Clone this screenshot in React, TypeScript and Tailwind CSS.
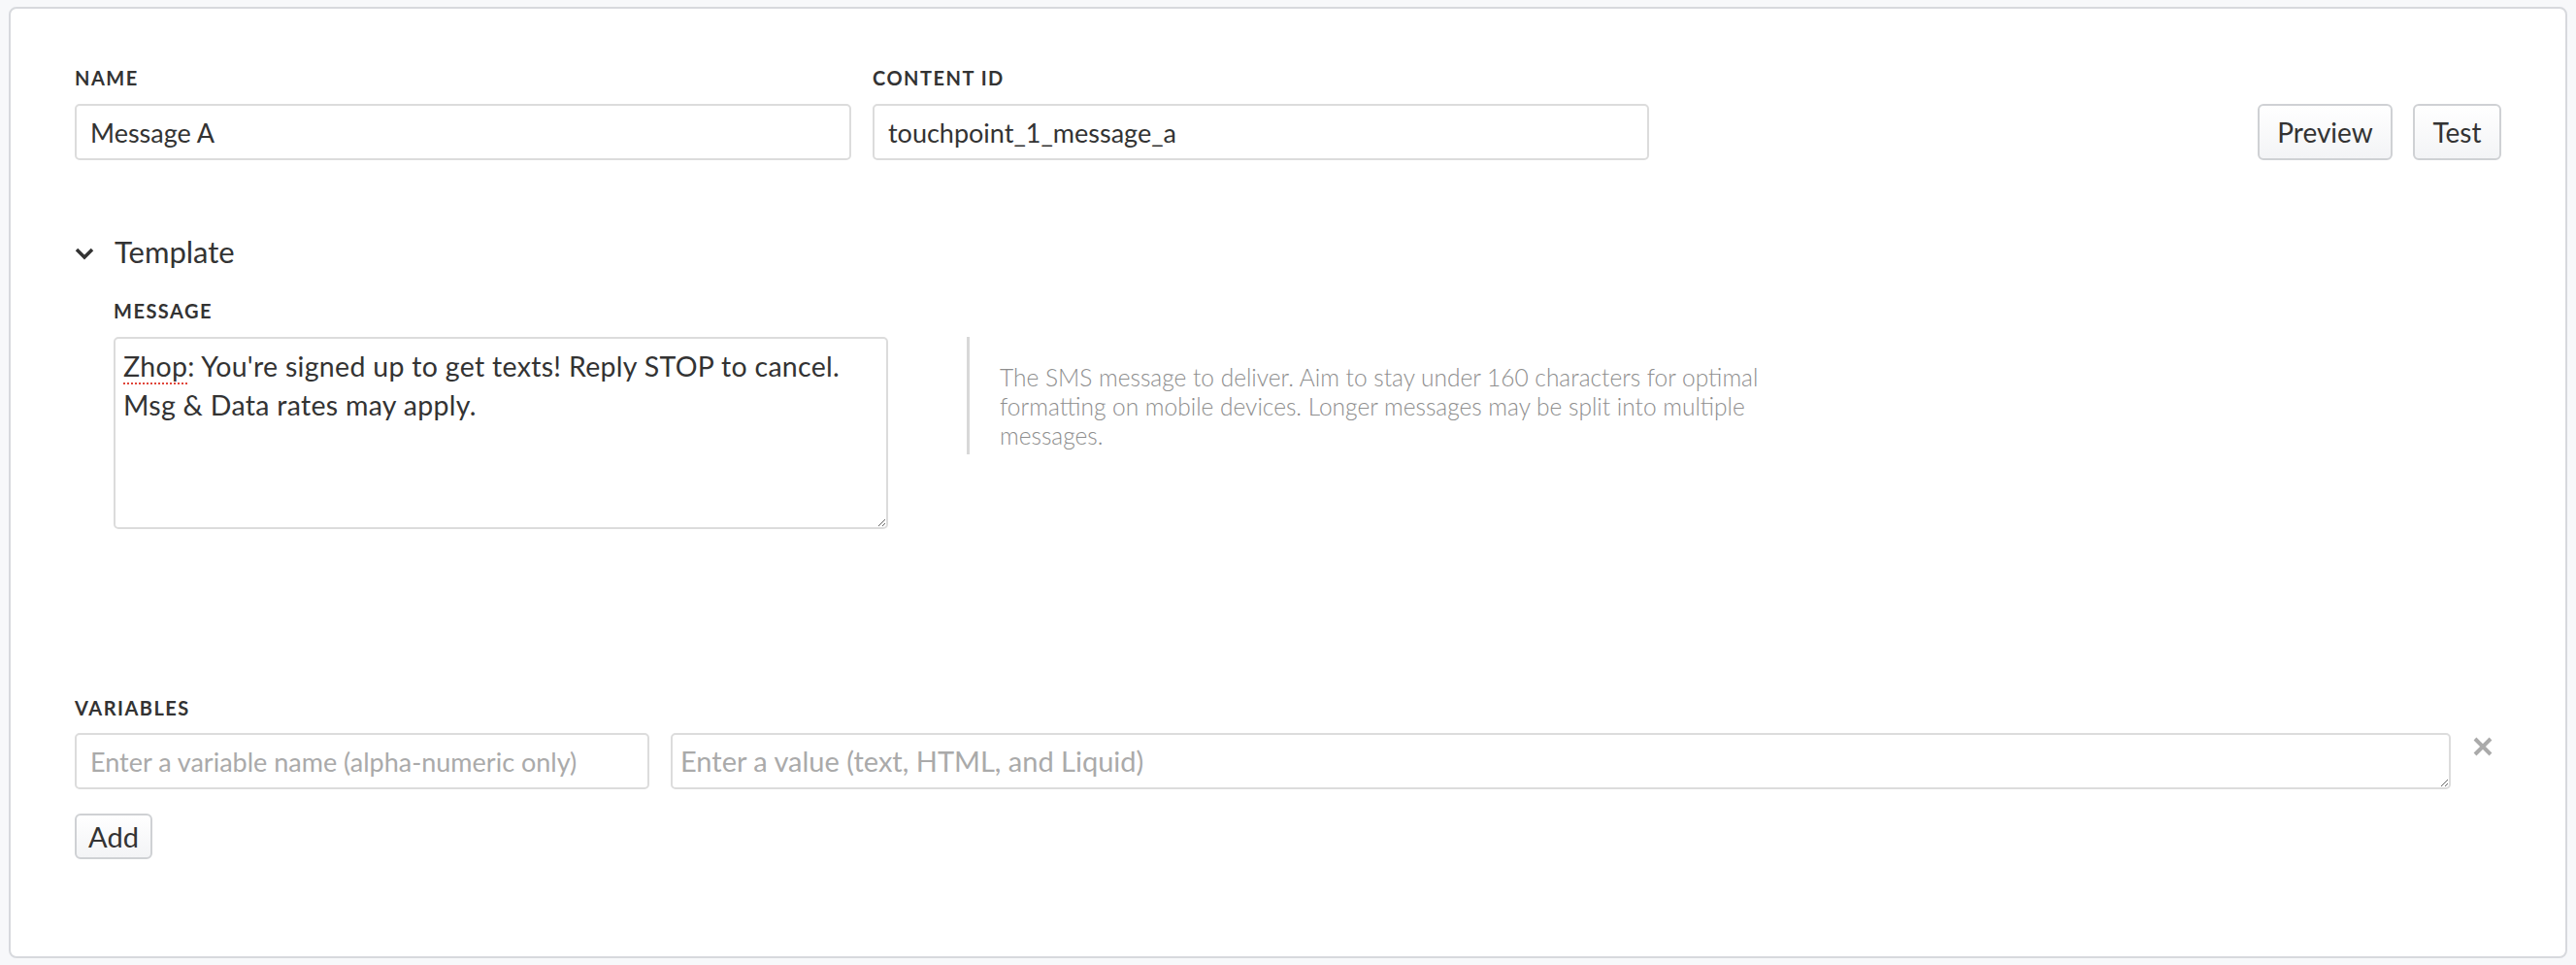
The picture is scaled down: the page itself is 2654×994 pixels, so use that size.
import React from "react";

const font = "font-['Lato','Open_Sans',sans-serif]";

function Label({ children, className }: { children: React.ReactNode; className?: string }) {
  return (
    <div
      className={
        "text-[20px] leading-[24px] font-bold uppercase tracking-[1.5px] text-[#333] " + (className ?? "mb-[15px]")
      }
    >
      {children}
    </div>
  );
}

function Field({ label, value }: { label: string; value: string }) {
  return (
    <div className="flex flex-col">
      <Label>{label}</Label>
      <input
        className="h-[58px] w-[800px] rounded-[5px] border-2 border-[#dcdcdc] bg-white px-[14px] text-[27px] text-[#333] outline-none"
        defaultValue={value}
      />
    </div>
  );
}

function Button({ children, className }: { children: React.ReactNode; className?: string }) {
  return (
    <button
      className={
        "rounded-[6px] border-2 border-[#cfd1d4] bg-gradient-to-b from-white to-[#f3f4f6] text-[#333] " +
        (className ?? "")
      }
    >
      {children}
    </button>
  );
}

export default function App() {
  return (
    <div className={`min-h-screen bg-[#f7f8fa] px-[9px] pt-[7px] ${font} text-[#333]`}>
      <div className="h-[980px] rounded-[8px] border-2 border-[#d7d9dd] bg-white px-[66px] pt-[59px]">
        {/* name / content id / actions */}
        <div className="flex items-end gap-[22px]">
          <Field label="Name" value="Message A" />
          <Field label="Content ID" value="touchpoint_1_message_a" />
          <div className="ml-auto flex gap-[21px]">
            <Button className="h-[58px] w-[139px] text-[28px]">Preview</Button>
            <Button className="h-[58px] w-[91px] text-[28px]">Test</Button>
          </div>
        </div>

        {/* template section */}
        <div className="mt-[76px] flex h-[36px] items-center gap-[21px]">
          <svg width="20" height="13" viewBox="0 0 20 13" className="mt-[4px]">
            <path d="M2 2 L10 10 L18 2" fill="none" stroke="#333" strokeWidth="3.5" />
          </svg>
          <span className="text-[31px] leading-[36px]">Template</span>
        </div>

        <div className="ml-[40px] mt-[31px]">
          <Label>Message</Label>
          <div className="flex items-start gap-[81px]">
            <div className="h-[198px] w-[798px] shrink-0 resize overflow-auto rounded-[5px] border-2 border-[#dcdcdc] p-[8px] text-[28.5px] leading-[40px] tracking-[0.3px] text-[#333]">
              <span className="underline decoration-[#e0453a] decoration-dotted decoration-2 underline-offset-[6px]">
                Zhop
              </span>
              : You're signed up to get texts! Reply STOP to cancel. Msg &amp; Data rates may apply.
            </div>
            <div className="h-[121px] border-l-[3px] border-[#d8d8d8] pl-[31px] pt-[27px]">
              <p className="w-[810px] text-[24.5px] leading-[30px] font-light text-[#8e8e8e]">
                The SMS message to deliver. Aim to stay under 160 characters for optimal formatting on mobile
                devices. Longer messages may be split into multiple messages.
              </p>
            </div>
          </div>
        </div>

        {/* variables */}
        <div className="mt-[172px]">
          <Label className="mb-[14px]">Variables</Label>
          <div className="flex items-start">
            <input
              className="h-[58px] w-[592px] rounded-[5px] border-2 border-[#dcdcdc] px-[14px] text-[27px] outline-none placeholder:text-[#aaa]"
              placeholder="Enter a variable name (alpha-numeric only)"
            />
            <textarea
              className="ml-[22px] h-[58px] w-[1834px] resize-y rounded-[5px] border-2 border-[#dcdcdc] px-[8px] py-[8px] text-[29px] leading-[38px] outline-none placeholder:text-[#aaa]"
              placeholder="Enter a value (text, HTML, and Liquid)"
            />
            <svg width="20" height="20" viewBox="0 0 20 20" className="ml-[23px] mt-[4px]">
              <path d="M2 2 L18 18 M18 2 L2 18" stroke="#aaa" strokeWidth="4" />
            </svg>
          </div>
          <Button className="mt-[25px] h-[47px] w-[80px] text-[29px]">Add</Button>
        </div>
      </div>
    </div>
  );
}
